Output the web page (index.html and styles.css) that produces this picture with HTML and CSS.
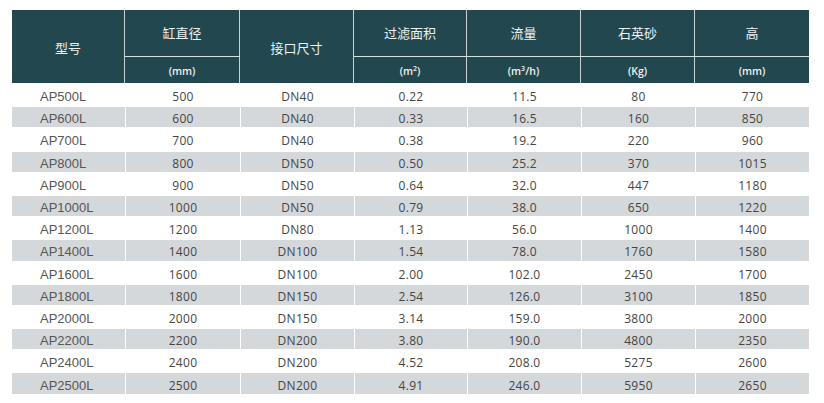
FILE: index.html
```html
<!DOCTYPE html>
<html lang="zh">
<head>
<meta charset="utf-8">
<title>规格参数</title>
<link rel="stylesheet" href="styles.css">
</head>
<body>
<table class="spec">
  <colgroup>
    <col class="c1"><col class="c2"><col class="c3"><col class="c4"><col class="c5"><col class="c6"><col class="c7">
  </colgroup>
  <thead>
    <tr class="h1">
      <th rowspan="2" class="tall">型号</th>
      <th>缸直径</th>
      <th rowspan="2" class="tall">接口尺寸</th>
      <th>过滤面积</th>
      <th>流量</th>
      <th>石英砂</th>
      <th class="last">高</th>
    </tr>
    <tr class="h2">
      <th>(mm)</th>
      <th>(m<sup>2</sup>)</th>
      <th>(m<sup>3</sup>/h)</th>
      <th>(Kg)</th>
      <th class="last">(mm)</th>
    </tr>
  </thead>
  <tbody>
    <tr><td class="model">AP500L</td><td>500</td><td>DN40</td><td>0.22</td><td>11.5</td><td>80</td><td>770</td></tr>
    <tr><td class="model">AP600L</td><td>600</td><td>DN40</td><td>0.33</td><td>16.5</td><td>160</td><td>850</td></tr>
    <tr><td class="model">AP700L</td><td>700</td><td>DN40</td><td>0.38</td><td>19.2</td><td>220</td><td>960</td></tr>
    <tr><td class="model">AP800L</td><td>800</td><td>DN50</td><td>0.50</td><td>25.2</td><td>370</td><td>1015</td></tr>
    <tr><td class="model">AP900L</td><td>900</td><td>DN50</td><td>0.64</td><td>32.0</td><td>447</td><td>1180</td></tr>
    <tr><td class="model">AP1000L</td><td>1000</td><td>DN50</td><td>0.79</td><td>38.0</td><td>650</td><td>1220</td></tr>
    <tr><td class="model">AP1200L</td><td>1200</td><td>DN80</td><td>1.13</td><td>56.0</td><td>1000</td><td>1400</td></tr>
    <tr><td class="model">AP1400L</td><td>1400</td><td>DN100</td><td>1.54</td><td>78.0</td><td>1760</td><td>1580</td></tr>
    <tr><td class="model">AP1600L</td><td>1600</td><td>DN100</td><td>2.00</td><td>102.0</td><td>2450</td><td>1700</td></tr>
    <tr><td class="model">AP1800L</td><td>1800</td><td>DN150</td><td>2.54</td><td>126.0</td><td>3100</td><td>1850</td></tr>
    <tr><td class="model">AP2000L</td><td>2000</td><td>DN150</td><td>3.14</td><td>159.0</td><td>3800</td><td>2000</td></tr>
    <tr><td class="model">AP2200L</td><td>2200</td><td>DN200</td><td>3.80</td><td>190.0</td><td>4800</td><td>2350</td></tr>
    <tr><td class="model">AP2400L</td><td>2400</td><td>DN200</td><td>4.52</td><td>208.0</td><td>5275</td><td>2600</td></tr>
    <tr><td class="model">AP2500L</td><td>2500</td><td>DN200</td><td>4.91</td><td>246.0</td><td>5950</td><td>2650</td></tr>
  </tbody>
</table>
</body>
</html>
```
FILE: styles.css
```css
html, body {
  margin: 0;
  padding: 0;
  background: #ffffff;
}

.spec {
  margin: 10px 0 0 12px;
  width: 797px;
  table-layout: fixed;
  border-collapse: separate;
  border-spacing: 0;
  font-family: "Open Sans", "DejaVu Sans", sans-serif;
}

.c1 { width: 113px; }
.c2 { width: 115px; }
.c3 { width: 114px; }
.c4 { width: 113px; }
.c5 { width: 114px; }
.c6 { width: 114px; }
.c7 { width: 114px; }

.spec th {
  background: #23474f;
  color: #eef2f2;
  font-weight: normal;
  text-align: center;
  padding: 0;
  border-right: 1px solid #c9d3d5;
}

.spec th.last {
  border-right: none;
}

.h1 th {
  height: 46px;
  font-family: "Noto Sans CJK SC", "Noto Sans", sans-serif;
  font-size: 13px;
  line-height: 16px;
  border-bottom: 1px solid #d7dfe0;
}

.h1 th.tall {
  border-bottom: none;
  padding-top: 3px;
}

.h2 th {
  height: 25px;
  font-family: "Open Sans", "DejaVu Sans", sans-serif;
  font-size: 10.5px;
  font-weight: 600;
  line-height: 12px;
  padding-top: 1px;
}

.h2 sup {
  font-size: 7px;
  line-height: 0;
  vertical-align: 4px;
}

.spec td {
  height: 16.2px;
  padding: 4px 0 0 0;
  border-top: 2px solid #ffffff;
  border-left: 1px solid #ffffff;
  text-align: center;
  font-size: 12px;
  line-height: 14px;
  color: #454545;
  letter-spacing: 0.3px;
}

.spec td.model {
  text-align: left;
  padding-left: 28px;
  font-family: "Liberation Sans", Arial, sans-serif;
  font-size: 13px;
  color: #565656;
  letter-spacing: 0;
  border-left: none;
}

.spec tbody tr:nth-child(even) td {
  background: #d5d8da;
}
```
